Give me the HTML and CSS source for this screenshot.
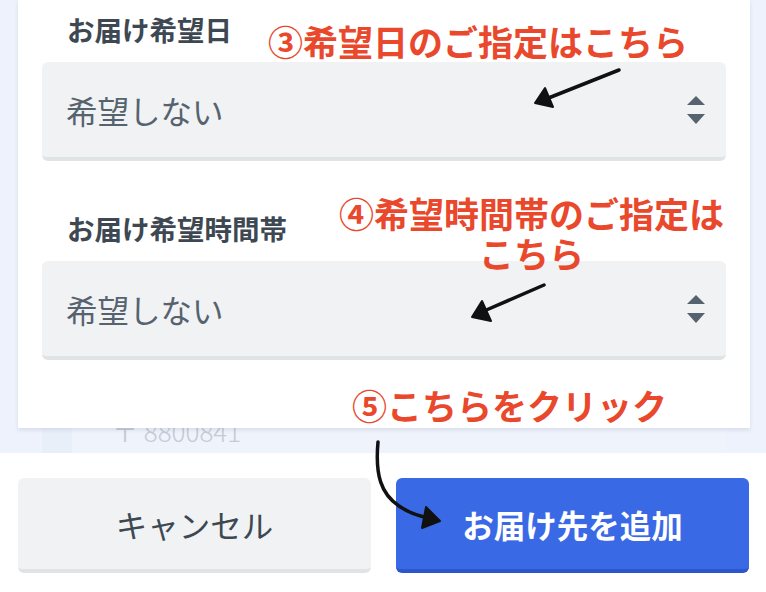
FILE: index.html
```html
<!DOCTYPE html>
<html lang="ja">

<head>
  <meta charset="UTF-8">
  <meta name="viewport" content="width=device-width, initial-scale=1.0">
  <title>お届け先を追加</title>
  <link rel="stylesheet" href="styles.css">
</head>

<body>
  <div class="page">
    <div class="backdrop">
      <div class="card">
        <div class="field">
          <div class="field_label">お届け希望日</div>
          <div class="select_box">
            <span class="select_text">希望しない</span>
            <svg class="select_icon" width="18" height="28" viewBox="0 0 18 28">
              <polygon points="9,0 18,9 0,9" />
              <polygon points="0,18 18,18 9,28" />
            </svg>
          </div>
        </div>
        <div class="field">
          <div class="field_label">お届け希望時間帯</div>
          <div class="select_box">
            <span class="select_text">希望しない</span>
            <svg class="select_icon" width="18" height="28" viewBox="0 0 18 28">
              <polygon points="9,0 18,9 0,9" />
              <polygon points="0,18 18,18 9,28" />
            </svg>
          </div>
        </div>
      </div>
      <div class="ghost_row">
        <div class="ghost_box">
          <span class="ghost_icon"></span>
          <span class="ghost_text">〒 8800841</span>
        </div>
      </div>
    </div>

    <div class="actions">
      <button class="btn btn_cancel" type="button">キャンセル</button>
      <button class="btn btn_submit" type="button">お届け先を追加</button>
    </div>

    <!-- 説明用の注釈 -->
    <div class="note note_date">③希望日のご指定はこちら</div>
    <div class="note note_time">④希望時間帯のご指定は<br>こちら</div>
    <div class="note note_click">⑤こちらをクリック</div>

    <svg class="marks" width="766" height="592" viewBox="0 0 766 592">
      <path d="M619 70 L546 99" />
      <polygon points="535,103 545,88 553,107" />
      <path d="M544 285 L484 311" />
      <polygon points="472,317 482,301 491,321" />
      <path d="M378 442 C375 475 381 494 399 506 C409 513 418 516 429 518" />
      <polygon points="440,521 426,507 422,528" />
    </svg>
  </div>
</body>
</html>
```

FILE: styles.css
```css
body {
  margin: 0;
  background: #ffffff;
  font-family: "Noto Sans CJK JP", "Noto Sans", sans-serif;
}

.page {
  position: relative;
  width: 766px;
  height: 592px;
  overflow: hidden;
}

.backdrop {
  height: 453px;
  background-color: #eef2fc;
  padding: 0 16px 0 18px;
  overflow: hidden;
}

.card {
  position: relative;
  z-index: 1;
  height: 428px;
  background: #ffffff;
  padding: 9px 24px 0 24px;
  box-sizing: border-box;
  box-shadow: 0 2px 4px rgba(40, 60, 90, 0.12);
}

.field {
  margin-bottom: 47px;
}

.field:first-child .select_box {
  margin-top: 0;
}

.field_label {
  font-size: 27.5px;
  font-weight: bold;
  line-height: 40px;
  color: #3d4852;
  padding-left: 25px;
  margin-bottom: 13px;
}

.select_box {
  display: flex;
  align-items: center;
  justify-content: space-between;
  height: 95px;
  padding: 0 21px 0 24px;
  background: #f0f2f4;
  border-bottom: 4px solid #dfe4e7;
  border-radius: 6px;
}

.select_text {
  font-size: 31.5px;
  color: #56636f;
}

.select_icon {
  fill: #56636f;
}

.ghost_row {
  padding: 0 24px;
  margin-top: -20px;
}

.ghost_box {
  display: flex;
  align-items: flex-end;
  height: 45px;
  background: #eff3fc;
}

.ghost_icon {
  width: 30px;
  height: 45px;
  background: #e9eff9;
}

.ghost_text {
  font-size: 26px;
  font-weight: 300;
  line-height: 34px;
  color: #c5cad3;
  margin-left: 40px;
  margin-bottom: 5px;
}

.actions {
  display: flex;
  gap: 25px;
  padding: 25px 17px 0 18px;
}

.btn {
  flex: 1;
  height: 95px;
  border: 0;
  border-radius: 6px;
  font-family: "Noto Sans CJK JP", "Noto Sans", sans-serif;
  font-size: 31.5px;
  padding: 0;
}

.btn_cancel {
  background: #f0f2f4;
  color: #3d4852;
  border-bottom: 4px solid #dfe4e7;
}

.btn_submit {
  background: #3a69e6;
  color: #ffffff;
  font-weight: bold;
  border-bottom: 4px solid #2c57cc;
}

.note {
  position: absolute;
  z-index: 2;
  font-size: 35px;
  font-weight: bold;
  line-height: 40px;
  color: #e9482c;
  text-align: center;
  white-space: nowrap;
}

.note_date {
  left: 268px;
  top: 21px;
}

.note_time {
  left: 339px;
  top: 193px;
}

.note_click {
  left: 352px;
  top: 385px;
}

.marks {
  position: absolute;
  z-index: 3;
  left: 0;
  top: 0;
  pointer-events: none;
}

.marks path {
  fill: none;
  stroke: #111111;
  stroke-width: 3.5;
  stroke-linecap: round;
}

.marks polygon {
  fill: #111111;
  stroke: #111111;
  stroke-width: 2;
  stroke-linejoin: round;
}
```
